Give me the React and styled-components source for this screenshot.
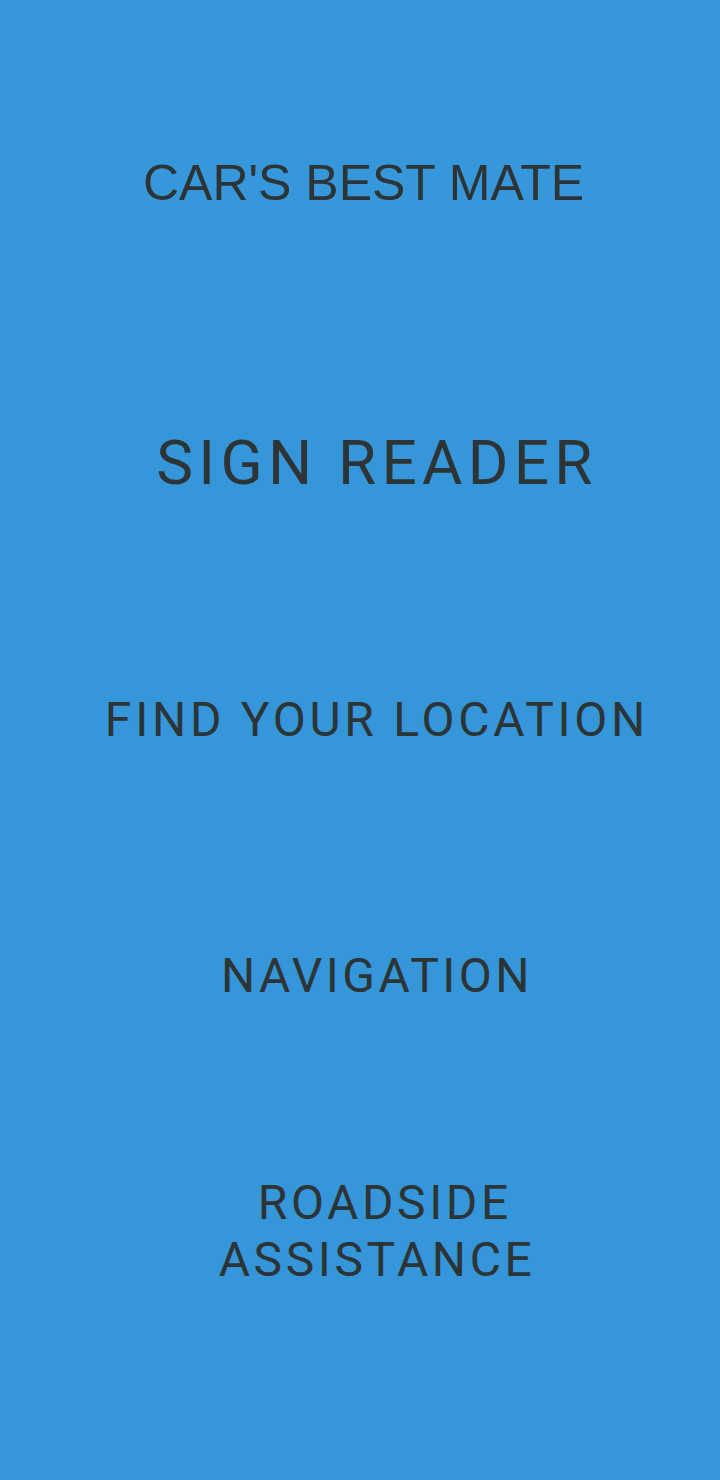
import React from "react";
import styled, { createGlobalStyle } from "styled-components";

const Global = createGlobalStyle`
  html, body {
    margin: 0;
    padding: 0;
    background: #3697db;
  }
  #root {
    min-height: 1480px;
  }
`;

const Page = styled.main`
  box-sizing: border-box;
  width: 720px;
  min-height: 1480px;
  background: #3697db;
  display: flex;
  flex-direction: column;
  align-items: stretch;
  padding-top: 158px;
`;

const Title = styled.h1`
  margin: 0;
  padding-left: 7px;
  text-align: center;
  font-family: "Liberation Sans", Arial, sans-serif;
  font-weight: 400;
  font-size: 50px;
  line-height: 50px;
  color: #2d3436;
`;

const Menu = styled.nav`
  margin-top: 190px;
  padding: 0 62px 0 92px;
  display: flex;
  flex-direction: column;
  gap: 126px;
`;

const MenuButton = styled.button`
  box-sizing: border-box;
  height: 130px;
  width: 100%;
  border: none;
  margin: 0;
  padding: 0 0 0 4px;
  background: #3596da;
  color: #2d3436;
  font-family: Roboto, "Liberation Sans", sans-serif;
  font-weight: 400;
  font-size: ${(p) => p.$size}px;
  line-height: ${(p) => p.$lh}px;
  letter-spacing: ${(p) => p.$ls}em;
  text-align: center;
  display: flex;
  align-items: center;
  justify-content: center;
  cursor: pointer;
`;

const items = [
  { label: "SIGN READER", size: 62, lh: 62, ls: 0.085 },
  { label: "FIND YOUR LOCATION", size: 48, lh: 57, ls: 0.078 },
  { label: "NAVIGATION", size: 48, lh: 57, ls: 0.072 },
  { label: "\u00A0ROADSIDE ASSISTANCE", size: 48, lh: 57, ls: 0.075 },
];

export default function App() {
  return (
    <>
      <Global />
      <Page>
        <Title>CAR'S BEST MATE</Title>
        <Menu>
          {items.map((it) => (
            <MenuButton key={it.label} $size={it.size} $lh={it.lh} $ls={it.ls}>
              {it.label}
            </MenuButton>
          ))}
        </Menu>
      </Page>
    </>
  );
}
